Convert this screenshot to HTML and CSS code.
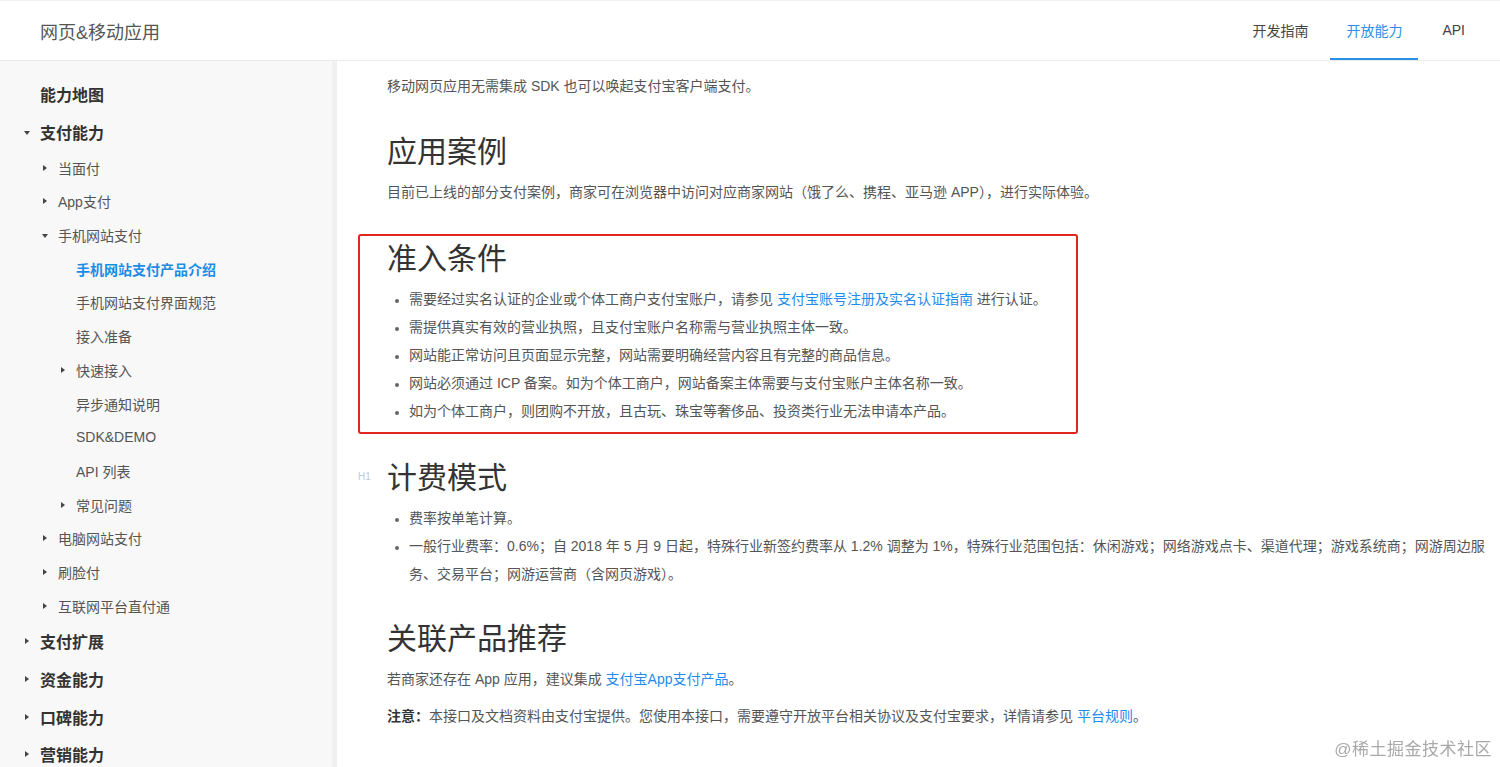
FILE: index.html
```html
<!DOCTYPE html>
<html>
<head>
    <title>手机网站支付产品介绍 - 网页&移动应用</title>
    <meta charset="UTF-8">
    <meta name="viewport" content="width=device-width, initial-scale=1.0">
    <link rel="stylesheet" href="styles.css">
</head>
<body>
    <header class="topbar">
        <div class="site-title">网页&amp;移动应用</div>
        <nav class="topnav">
            <a href="#" class="topnav-item">开发指南</a>
            <a href="#" class="topnav-item active">开放能力</a>
            <a href="#" class="topnav-item">API</a>
        </nav>
    </header>

    <div class="layout">
        <aside class="sidebar">
            <ul class="menu">
                <li class="menu-top"><span class="label">能力地图</span></li>
                <li class="menu-top"><span class="caret down"></span><span class="label">支付能力</span></li>
                <li class="menu-sub"><span class="caret"></span><span class="label">当面付</span></li>
                <li class="menu-sub"><span class="caret"></span><span class="label">App支付</span></li>
                <li class="menu-sub"><span class="caret down"></span><span class="label">手机网站支付</span></li>
                <li class="menu-sub lvl3 current"><span class="label">手机网站支付产品介绍</span></li>
                <li class="menu-sub lvl3"><span class="label">手机网站支付界面规范</span></li>
                <li class="menu-sub lvl3"><span class="label">接入准备</span></li>
                <li class="menu-sub lvl3"><span class="caret"></span><span class="label">快速接入</span></li>
                <li class="menu-sub lvl3"><span class="label">异步通知说明</span></li>
                <li class="menu-sub lvl3"><span class="label">SDK&amp;DEMO</span></li>
                <li class="menu-sub lvl3"><span class="label">API 列表</span></li>
                <li class="menu-sub lvl3"><span class="caret"></span><span class="label">常见问题</span></li>
                <li class="menu-sub"><span class="caret"></span><span class="label">电脑网站支付</span></li>
                <li class="menu-sub"><span class="caret"></span><span class="label">刷脸付</span></li>
                <li class="menu-sub"><span class="caret"></span><span class="label">互联网平台直付通</span></li>
                <li class="menu-top"><span class="caret"></span><span class="label">支付扩展</span></li>
                <li class="menu-top"><span class="caret"></span><span class="label">资金能力</span></li>
                <li class="menu-top"><span class="caret"></span><span class="label">口碑能力</span></li>
                <li class="menu-top"><span class="caret"></span><span class="label">营销能力</span></li>
            </ul>
        </aside>

        <main class="doc">
            <p class="intro">移动网页应用无需集成 SDK 也可以唤起支付宝客户端支付。</p>

            <h1>应用案例</h1>
            <p>目前已上线的部分支付案例，商家可在浏览器中访问对应商家网站（饿了么、携程、亚马逊 APP），进行实际体验。</p>

            <div class="marked">
                <h1>准入条件</h1>
                <ul>
                    <li>需要经过实名认证的企业或个体工商户支付宝账户，请参见 <a href="#">支付宝账号注册及实名认证指南</a> 进行认证。</li>
                    <li>需提供真实有效的营业执照，且支付宝账户名称需与营业执照主体一致。</li>
                    <li>网站能正常访问且页面显示完整，网站需要明确经营内容且有完整的商品信息。</li>
                    <li>网站必须通过 ICP 备案。如为个体工商户，网站备案主体需要与支付宝账户主体名称一致。</li>
                    <li>如为个体工商户，则团购不开放，且古玩、珠宝等奢侈品、投资类行业无法申请本产品。</li>
                </ul>
            </div>

            <h1 class="hovered"><span class="tag">H1</span>计费模式</h1>
            <ul>
                <li>费率按单笔计算。</li>
                <li>一般行业费率：0.6%；自 2018 年 5 月 9 日起，特殊行业新签约费率从 1.2% 调整为 1%，特殊行业范围包括：休闲游戏；网络游戏点卡、渠道代理；游戏系统商；网游周边服务、交易平台；网游运营商（含网页游戏）。</li>
            </ul>

            <h1>关联产品推荐</h1>
            <p>若商家还存在 App 应用，建议集成 <a href="#">支付宝App支付产品</a>。</p>
            <p class="note"><strong>注意：</strong>本接口及文档资料由支付宝提供。您使用本接口，需要遵守开放平台相关协议及支付宝要求，详情请参见 <a href="#">平台规则</a>。</p>
        </main>
    </div>

    <div class="watermark">@稀土掘金技术社区</div>
</body>
</html>
```

FILE: styles.css
```css
html, body { margin: 0; padding: 0; }
body { font-family: "Liberation Sans", "Noto Sans CJK SC", sans-serif; color: #555; font-size: 14px; background: #fff; overflow: hidden; height: 767px; }
a { color: #1f8ceb; text-decoration: none; }

/* top bar */
.topbar { height: 59px; border-top: 1px solid #f2f2f2; border-bottom: 1px solid #ececec; display: flex; align-items: center; justify-content: space-between; padding: 0 19px 0 40px; }
.site-title { font-size: 18px; color: #555; }
.topnav { display: flex; gap: 8px; height: 100%; }
.topnav-item { display: flex; align-items: center; padding: 0 16px; color: #444; font-size: 14px; border-bottom: 2px solid transparent; box-sizing: border-box; height: 100%; }
.topnav-item:first-child { padding: 0 14px 0 18px; }
.topnav-item.active { color: #2a8fe6; border-bottom-color: #2a8fe6; }

/* layout */
.layout { display: flex; }
.sidebar { width: 332px; flex: none; background: #f8f8f8; border-right: 5px solid #f0f0f0; min-height: 707px; }
.doc { flex: 1; padding: 11px 10px 0 50px; }

/* side menu */
.menu { list-style: none; margin: 0; padding: 14.5px 0 0; }
.menu li { display: flex; align-items: center; position: relative; white-space: nowrap; }
.menu-top { height: 37.7px; padding-left: 40px; font-size: 16px; font-weight: bold; color: #333; }
.menu-sub { height: 33.7px; padding-left: 58px; font-size: 14px; color: #555; }
.menu-sub.lvl3 { padding-left: 76px; }
.menu-sub.current { color: #1c8ce6; font-weight: bold; }
.caret { position: absolute; width: 0; height: 0; border-top: 3.5px solid transparent; border-bottom: 3.5px solid transparent; border-left: 4px solid #444; top: 50%; margin-top: -3px; }
.caret.down { border-left: 3.5px solid transparent; border-right: 3.5px solid transparent; border-top: 4px solid #444; border-bottom: 0; margin-top: -1px; }
.menu-top .caret { left: 25px; }
.menu-sub .caret { left: 43px; }
.menu-sub.lvl3 .caret { left: 61px; }
.menu-top .caret.down { left: 24px; }
.menu-sub .caret.down { left: 42px; }

/* document */
.doc p { margin: 0 0 9px; line-height: 28px; }
.doc p.intro { margin-bottom: 32px; }
.doc h1 { font-size: 30px; font-weight: normal; color: #333; line-height: 40px; margin: 0 0 6px; position: relative; }
.doc ul { margin: 0; padding-left: 22px; list-style: disc; }
.doc li { line-height: 28px; }
.doc li::marker { font-size: 12px; color: #666; }
.doc > h1 { margin-top: 24px; }
.doc > p + h1 { margin-top: 28px; }
.doc > ul + h1 { margin-top: 31px; }
.doc > h1:first-of-type { margin-top: 0; }
.note strong { color: #333; }

.marked { width: 720px; box-sizing: border-box; margin: 28px 0 0 -29px; padding: 3px 0 7px 27px; border: 2px solid #e2261d; border-radius: 3px; }

.tag { position: absolute; left: -29px; top: 13px; font-size: 10px; line-height: 12px; color: #c8c8c8; }

.watermark { position: fixed; right: 8px; bottom: 7px; font-size: 17px; color: #a9a9a9; letter-spacing: 0.5px; }
```
